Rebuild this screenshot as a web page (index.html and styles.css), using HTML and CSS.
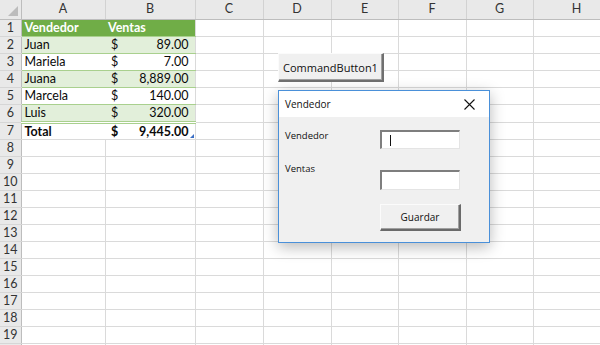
FILE: index.html
```html
<!DOCTYPE html>
<html>
<head>
<meta charset="utf-8">
<link rel="stylesheet" href="styles.css">
</head>
<body>
<div class="app">
<table class="sheet">
<colgroup>
<col class="c-rh"><col class="c-a"><col class="c-b"><col class="c-n"><col class="c-n"><col class="c-m"><col class="c-n"><col class="c-m"><col class="c-h">
</colgroup>
<tr class="hdr"><th class="corner"><span class="tri"></span></th><th>A</th><th>B</th><th>C</th><th>D</th><th>E</th><th>F</th><th>G</th><th>H</th></tr>
<tr class="r-head"><th>1</th><td class="t-h">Vendedor</td><td class="t-h tb">Ventas</td><td></td><td></td><td></td><td></td><td></td><td></td></tr>
<tr class="r-band"><th>2</th><td class="t-a">Juan</td><td class="t-b tb"><span class="cur">$</span><span>89.00</span></td><td></td><td></td><td></td><td></td><td></td><td></td></tr>
<tr class="r-plain"><th>3</th><td class="t-a">Mariela</td><td class="t-b tb"><span class="cur">$</span><span>7.00</span></td><td></td><td></td><td></td><td></td><td></td><td></td></tr>
<tr class="r-band"><th>4</th><td class="t-a">Juana</td><td class="t-b tb"><span class="cur">$</span><span>8,889.00</span></td><td></td><td></td><td></td><td></td><td></td><td></td></tr>
<tr class="r-plain"><th>5</th><td class="t-a">Marcela</td><td class="t-b tb"><span class="cur">$</span><span>140.00</span></td><td></td><td></td><td></td><td></td><td></td><td></td></tr>
<tr class="r-band"><th>6</th><td class="t-a">Luis</td><td class="t-b tb"><span class="cur">$</span><span>320.00</span></td><td></td><td></td><td></td><td></td><td></td><td></td></tr>
<tr class="r-total"><th>7</th><td class="t-a">Total</td><td class="t-b tb"><span class="cur">$</span><span>9,445.00</span><span class="handle"></span></td><td></td><td></td><td></td><td></td><td></td><td></td></tr>
<tr><th>8</th><td></td><td></td><td></td><td></td><td></td><td></td><td></td><td></td></tr>
<tr><th>9</th><td></td><td></td><td></td><td></td><td></td><td></td><td></td><td></td></tr>
<tr><th>10</th><td></td><td></td><td></td><td></td><td></td><td></td><td></td><td></td></tr>
<tr><th>11</th><td></td><td></td><td></td><td></td><td></td><td></td><td></td><td></td></tr>
<tr><th>12</th><td></td><td></td><td></td><td></td><td></td><td></td><td></td><td></td></tr>
<tr><th>13</th><td></td><td></td><td></td><td></td><td></td><td></td><td></td><td></td></tr>
<tr><th>14</th><td></td><td></td><td></td><td></td><td></td><td></td><td></td><td></td></tr>
<tr><th>15</th><td></td><td></td><td></td><td></td><td></td><td></td><td></td><td></td></tr>
<tr><th>16</th><td></td><td></td><td></td><td></td><td></td><td></td><td></td><td></td></tr>
<tr><th>17</th><td></td><td></td><td></td><td></td><td></td><td></td><td></td><td></td></tr>
<tr><th>18</th><td></td><td></td><td></td><td></td><td></td><td></td><td></td><td></td></tr>
<tr><th>19</th><td></td><td></td><td></td><td></td><td></td><td></td><td></td><td></td></tr>
<tr><th></th><td></td><td></td><td></td><td></td><td></td><td></td><td></td><td></td></tr>
</table>

<button class="cmd">CommandButton1</button>

<div class="dialog">
  <div class="titlebar">
    <span class="title">Vendedor</span>
    <svg class="close" width="11" height="11" viewBox="0 0 11 11"><path d="M0.5 0.5 L10.5 10.5 M10.5 0.5 L0.5 10.5" stroke="#111" stroke-width="1.1" fill="none"/></svg>
  </div>
  <div class="body">
    <div class="labels">
      <span class="lbl">Vendedor</span>
      <span class="lbl">Ventas</span>
    </div>
    <div class="fields">
      <div class="tbox tbox1"><span class="caret"></span></div>
      <div class="tbox tbox2"></div>
      <button class="save">Guardar</button>
    </div>
  </div>
</div>
</div>
</body>
</html>
```
FILE: styles.css
```css
html, body {
  margin: 0;
  padding: 0;
  background: #ffffff;
}
.app {
  position: relative;
  width: 600px;
  height: 345px;
  overflow: hidden;
}
.sheet {
  border-collapse: collapse;
  table-layout: fixed;
  width: 620px;
  font-family: Lato, "Liberation Sans", sans-serif;
  font-size: 12.5px;
  color: #0a0a0a;
}
.c-rh { width: 21px; }
.c-a { width: 84px; }
.c-b { width: 90px; }
.c-n { width: 68px; }
.c-m { width: 67px; }
.c-h { width: 87px; }

.sheet tr { height: 17px; }
.sheet td {
  padding: 0 3px;
  border-right: 1px solid #dadada;
  border-bottom: 1px solid #dadada;
  white-space: nowrap;
  overflow: hidden;
  line-height: 16px;
  box-sizing: border-box;
}
.sheet th {
  background: #e9e9e9;
  color: #333333;
  font-weight: normal;
  font-size: 12.5px;
  text-align: center;
  padding: 0;
  border-right: 1px solid #cfcfcf;
  border-bottom: 1px solid #d6d6d6;
  line-height: 16px;
}
.sheet tr th:first-child {
  border-right: 1px solid #bdbdbd;
}
.sheet .hdr { height: 19px; }
.sheet .hdr th {
  border-bottom: 1px solid #bdbdbd;
  border-right: 1px solid #d2d2d2;
  line-height: 18px;
}
.corner { position: relative; }
.tri {
  position: absolute;
  right: 3px;
  bottom: 3px;
  width: 0;
  height: 0;
  border-left: 10px solid transparent;
  border-bottom: 10px solid #bcbcbc;
}

/* table styles */
.r-head td.t-h {
  background: #70ad47;
  color: #ffffff;
  font-weight: bold;
  border-right: none;
  border-bottom: 1px solid #a9d08e;
}
.r-band td.t-a, .r-band td.t-b {
  background: #e2efda;
  border-right: none;
  border-bottom: 1px solid #a9d08e;
}
.r-plain td.t-a, .r-plain td.t-b {
  background: #ffffff;
  border-right: none;
  border-bottom: 1px solid #a9d08e;
}
td.tb { border-right: 1px solid #dadada !important; }
.r-band td.t-b, .r-plain td.t-b, .r-total td.t-b {
  position: relative;
}
.t-b {
  text-align: right;
  padding-right: 6px !important;
}
.t-b .cur {
  float: left;
  padding-left: 3px;
}
.r-total td.t-a, .r-total td.t-b {
  font-weight: bold;
  border-top: 3px double #a9d08e;
  border-right: none;
  border-bottom: 1px solid #dadada;
  line-height: 13px;
}
.r-total td.t-b { overflow: visible; }
.handle {
  position: absolute;
  right: 1px;
  bottom: 1px;
  width: 0;
  height: 0;
  border-left: 4px solid transparent;
  border-bottom: 4px solid #3c6fc4;
}

/* floating controls */
.cmd {
  position: absolute;
  left: 278px;
  top: 53px;
  width: 106px;
  height: 29px;
  margin: 0;
  padding: 0;
  background: #f0f0f0;
  border-style: solid;
  border-width: 1px 2px 2px 1px;
  border-color: #fbfbfb #707070 #707070 #fbfbfb;
  box-shadow: inset -1px -1px 0 #a0a0a0;
  font-family: "Open Sans", "Noto Sans", sans-serif;
  font-size: 11px;
  color: #111;
  text-align: center;
}

.dialog {
  position: absolute;
  left: 278px;
  top: 90px;
  width: 212px;
  height: 153px;
  box-sizing: border-box;
  border: 1px solid #4a90d9;
  background: #f0f0f0;
  box-shadow: 0 4px 14px rgba(0, 0, 0, 0.28);
  font-family: "Open Sans", "Noto Sans", sans-serif;
  color: #111;
  display: flex;
  flex-direction: column;
}
.titlebar {
  height: 26px;
  background: #ffffff;
  display: flex;
  align-items: center;
  justify-content: space-between;
  padding: 0 14px 0 6px;
}
.title {
  font-size: 10px;
}
.close { display: block; }
.body {
  display: flex;
  padding-left: 6px;
}
.labels {
  width: 95px;
  display: flex;
  flex-direction: column;
  gap: 19px;
  padding-top: 12px;
}
.lbl {
  font-size: 9.5px;
  line-height: 14px;
}
.fields {
  display: flex;
  flex-direction: column;
  padding-top: 13px;
}
.tbox {
  width: 80px;
  box-sizing: border-box;
  background: #ffffff;
  border-style: solid;
  border-width: 2px 1px 1px 2px;
  border-color: #7e7e7e #e4e4e4 #e4e4e4 #7e7e7e;
  position: relative;
}
.tbox1 { height: 19px; }
.tbox2 { height: 20px; margin-top: 21px; }
.caret {
  position: absolute;
  left: 8px;
  top: 3px;
  width: 1px;
  height: 11px;
  background: #111;
}
.save {
  margin: 14px 0 0 0;
  width: 81px;
  height: 27px;
  padding: 0;
  background: #f0f0f0;
  border-style: solid;
  border-width: 1px 2px 2px 1px;
  border-color: #fbfbfb #6a6a6a #6a6a6a #fbfbfb;
  box-shadow: inset -1px -1px 0 #a0a0a0;
  font-family: "Open Sans", "Noto Sans", sans-serif;
  font-size: 10px;
  color: #111;
}
```
